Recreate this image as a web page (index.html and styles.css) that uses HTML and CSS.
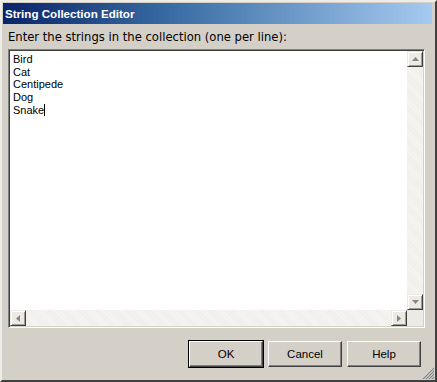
FILE: index.html
```html
<!DOCTYPE html>
<html>
<head>
<meta charset="utf-8">
<link rel="stylesheet" href="styles.css">
</head>
<body>
<div class="window">
  <div class="titlebar"><span class="title">String Collection Editor</span></div>
  <div class="content">
    <div class="label">Enter the strings in the collection (one per line):</div>
    <div class="editor">
      <div class="main-row">
        <div class="text">
          <div>Bird</div>
          <div>Cat</div>
          <div>Centipede</div>
          <div>Dog</div>
          <div>Snake<span class="caret"></span></div>
        </div>
        <div class="vscroll">
          <div class="sbtn"><svg width="7" height="4" viewBox="0 0 7 4"><path d="M0 4h7L3.5 0z" fill="#8a8780"/></svg></div>
          <div class="track"></div>
          <div class="sbtn"><svg width="7" height="4" viewBox="0 0 7 4"><path d="M0 0h7L3.5 4z" fill="#8a8780"/></svg></div>
        </div>
      </div>
      <div class="hrow">
        <div class="hscroll">
          <div class="sbtn"><svg width="4" height="7" viewBox="0 0 4 7"><path d="M4 0v7L0 3.5z" fill="#8a8780"/></svg></div>
          <div class="track"></div>
          <div class="sbtn"><svg width="4" height="7" viewBox="0 0 4 7"><path d="M0 0v7L4 3.5z" fill="#8a8780"/></svg></div>
        </div>
        <div class="corner"></div>
      </div>
    </div>
    <div class="buttons">
      <button class="btn default">OK</button>
      <button class="btn">Cancel</button>
      <button class="btn">Help</button>
    </div>
  </div>
  <svg class="grip" width="12" height="12" viewBox="0 0 12 12">
    <path d="M11 1L1 11M11 4L4 11M11 7L7 11M11 10L10 11" stroke="#fff" stroke-width="1"/>
    <path d="M12 1L1 12M12 4L4 12M12 7L7 12M12 10L10 12" stroke="#808080" stroke-width="1.2"/>
  </svg>
</div>
</body>
</html>
```
FILE: styles.css
```css
* { box-sizing: border-box; }
html, body { margin: 0; padding: 0; background: #d4d0c8; }
body { width: 437px; height: 382px; overflow: hidden; font-family: "DejaVu Sans", sans-serif; }
.window {
  position: relative;
  width: 437px; height: 382px;
  background: #d4d0c8;
  border-top: 2px solid #eeece6;
  border-left: 2px solid #eeece6;
  border-right: 2px solid #404040;
  border-bottom: 2px solid #404040;
  display: flex; flex-direction: column;
}
.titlebar {
  height: 21px; margin: 1px 3px 0 1px;
  background: linear-gradient(to right, #0a246a 0%, #3a6ea5 40%, #a6caf0 100%);
  display: flex; align-items: center;
}
.title {
  color: #fff; font-weight: bold; font-size: 11.6px; padding-left: 2px;
  font-family: "Liberation Sans", sans-serif;
}
.content { flex: 1; display: flex; flex-direction: column; padding: 6px 10px 0 6px; }
.label { font-size: 11.6px; color: #000; height: 16px; line-height: 14px; font-family: "DejaVu Sans", sans-serif; }
.editor {
  margin-top: 3px;
  height: 279px;
  border-top: 1px solid #808080; border-left: 1px solid #808080;
  border-right: 1px solid #fff; border-bottom: 1px solid #fff;
  box-shadow: inset 1px 1px 0 #404040, inset -1px -1px 0 #d4d0c8;
  padding: 1px;
  display: flex; flex-direction: column;
  background: #fff;
}
.main-row { flex: 1; display: flex; }
.text { flex: 1; padding: 2px 0 0 3px; font-family: "Liberation Sans", sans-serif; font-size: 11px; line-height: 12.7px; color: #000; }
.caret { display: inline-block; width: 1px; height: 12px; background: #000; vertical-align: -2px; }
.vscroll { width: 16px; display: flex; flex-direction: column; background: #eeede9; }
.vscroll .track { flex: 1; background: repeating-linear-gradient(45deg,#efeeea 0 1px,#f6f5f2 1px 2px); }
.hrow { height: 16px; display: flex; }
.hscroll { flex: 1; display: flex; background: #eeede9; }
.hscroll .track { flex: 1; background: repeating-linear-gradient(45deg,#efeeea 0 1px,#f6f5f2 1px 2px); }
.sbtn {
  width: 16px; height: 16px; flex: none;
  background: #eceae5;
  border-top: 1px solid #eceae5; border-left: 1px solid #eceae5;
  border-right: 1px solid #404040; border-bottom: 1px solid #404040;
  box-shadow: inset 1px 1px 0 #fff, inset -1px -1px 0 #a09d96;
  display: flex; align-items: center; justify-content: center;
}
.corner { width: 16px; height: 16px; background: #eceae5; }
.buttons { display: flex; justify-content: flex-end; gap: 5px; margin-top: 13px; padding-right: 4px; }
.btn {
  width: 74px; height: 26px;
  font-family: "Liberation Sans", sans-serif; font-size: 11.5px; color: #000;
  background: #d4d0c8;
  border-top: 1px solid #fff; border-left: 1px solid #fff;
  border-right: 1px solid #404040; border-bottom: 1px solid #404040;
  box-shadow: inset -1px -1px 0 #808080;
  padding: 0;
}
.btn.default {
  outline: 1px solid #000;
  outline-offset: 0;
}
.grip { position: absolute; right: 1px; bottom: 1px; }
```
